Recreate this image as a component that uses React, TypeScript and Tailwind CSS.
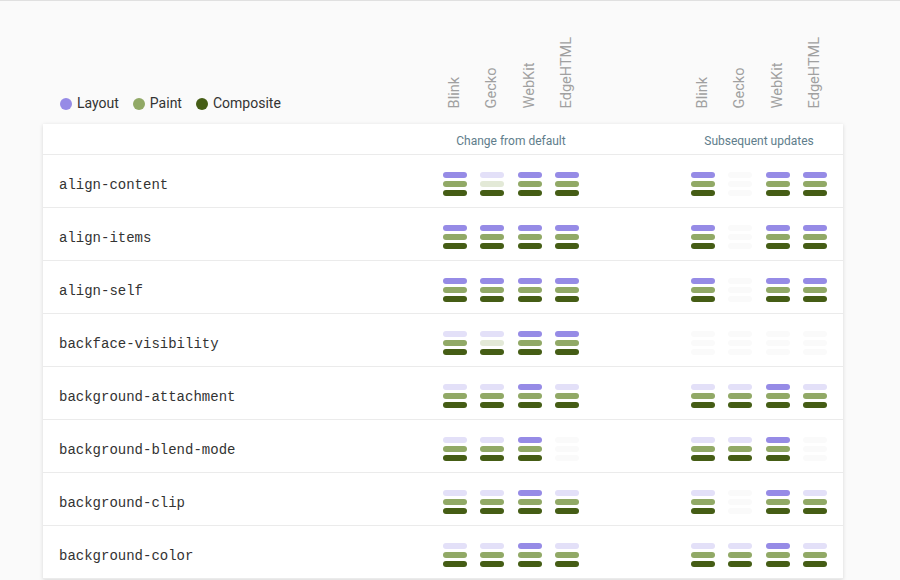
import React from "react";

type Cell = "111" | "011" | "001" | "x";

const ROWS: { name: string; change: Cell[]; updates: Cell[] }[] = [
  { name: "align-content", change: ["111", "001", "111", "111"], updates: ["111", "x", "111", "111"] },
  { name: "align-items", change: ["111", "111", "111", "111"], updates: ["111", "x", "111", "111"] },
  { name: "align-self", change: ["111", "111", "111", "111"], updates: ["111", "x", "111", "111"] },
  { name: "backface-visibility", change: ["011", "001", "111", "111"], updates: ["x", "x", "x", "x"] },
  { name: "background-attachment", change: ["011", "011", "111", "011"], updates: ["011", "011", "111", "011"] },
  { name: "background-blend-mode", change: ["011", "011", "111", "x"], updates: ["011", "011", "111", "x"] },
  { name: "background-clip", change: ["011", "011", "111", "011"], updates: ["011", "x", "111", "011"] },
  { name: "background-color", change: ["011", "011", "111", "011"], updates: ["011", "011", "111", "011"] },
];

const BROWSERS = ["Blink", "Gecko", "WebKit", "EdgeHTML"];

const ON = ["bg-[#968be6]", "bg-[#91a966]", "bg-[#455d15]"];
const OFF = ["bg-[#e3e0f8]", "bg-[#e3e9d7]", "bg-[#dde3d2]"];

function Triggers({ cell }: { cell: Cell }) {
  return (
    <div className="flex w-6 flex-col gap-[3px]">
      {[0, 1, 2].map((i) => {
        const color =
          cell === "x" ? "bg-[#fafafa]" : cell[i] === "1" ? ON[i] : OFF[i];
        return <div key={i} className={`h-[6px] w-6 rounded-[3px] ${color}`} />;
      })}
    </div>
  );
}

function Group({ cells }: { cells: Cell[] }) {
  return (
    <div className="flex w-[136px] justify-between">
      {cells.map((c, i) => (
        <Triggers key={i} cell={c} />
      ))}
    </div>
  );
}

function BrowserLabels() {
  return (
    <div className="flex w-[136px] justify-between">
      {BROWSERS.map((b) => (
        <div key={b} className="flex w-6 justify-center">
          <span className="rotate-180 text-[14.5px] leading-[14px] text-[#a0a0a0] [writing-mode:vertical-rl]">
            {b}
          </span>
        </div>
      ))}
    </div>
  );
}

const LEGEND = [
  { label: "Layout", color: "bg-[#968be6]" },
  { label: "Paint", color: "bg-[#91a966]" },
  { label: "Composite", color: "bg-[#455d15]" },
];

export default function App() {
  return (
    <div className="min-h-screen border-t border-[#e0e0e0] bg-[#fafafa] font-['Roboto',sans-serif]">
      <div className="ml-[43px] w-[800px]">
        <div className="flex h-[107px] items-end pr-4">
          <div className="mb-[-6px] flex flex-1 items-center gap-[14px] pl-[17px]">
            {LEGEND.map((l) => (
              <div key={l.label} className="flex items-center gap-[5px]">
                <span className={`h-3 w-3 rounded-full ${l.color}`} />
                <span className="text-[14px] text-[#333]">{l.label}</span>
              </div>
            ))}
          </div>
          <BrowserLabels />
          <div className="w-[112px]" />
          <BrowserLabels />
        </div>

        <div className="mt-4 bg-white shadow-[0_1px_4px_rgba(0,0,0,0.14)]">
          <div className="flex h-[31px] items-center border-b border-[#ebebeb] pt-[3px] pr-4 text-[12px] text-[#607d8b]">
            <div className="flex-1" />
            <div className="w-[136px] text-center">Change from default</div>
            <div className="w-[112px]" />
            <div className="w-[136px] text-center">Subsequent updates</div>
          </div>
          {ROWS.map((r) => (
            <div
              key={r.name}
              className="flex h-[53px] items-center border-b border-[#ebebeb] pt-[5px] pr-4"
            >
              <div className="flex-1 pt-[3px] pl-4 font-['Liberation_Mono',monospace] text-[14px] text-[#333]">
                {r.name}
              </div>
              <Group cells={r.change} />
              <div className="w-[112px]" />
              <Group cells={r.updates} />
            </div>
          ))}
        </div>
      </div>
    </div>
  );
}
